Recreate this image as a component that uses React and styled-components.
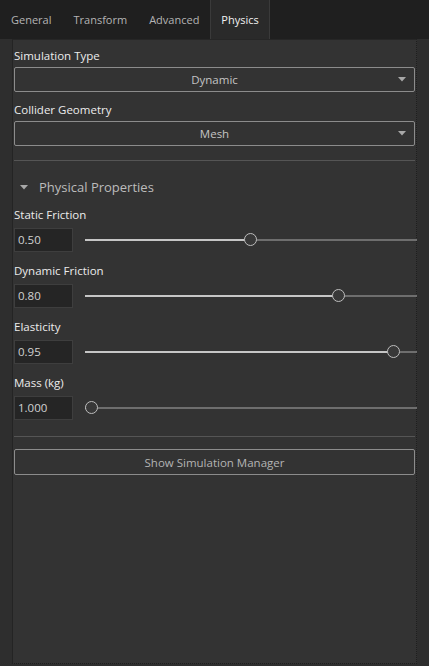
import React from 'react'
import styled, { createGlobalStyle } from 'styled-components'

const Global = createGlobalStyle`
html, body {
    margin:0;
    padding:0;
    background:#2e2e2e;
}
body {
    font-family:"Open Sans", "Noto Sans", sans-serif;
    -webkit-font-smoothing:antialiased;
}
`

const tabs = ['General', 'Transform', 'Advanced', 'Physics']

const sliders = [
    { label: 'Static Friction', value: '0.50', pos: 0.5 },
    { label: 'Dynamic Friction', value: '0.80', pos: 0.776 },
    { label: 'Elasticity', value: '0.95', pos: 0.95 },
    { label: 'Mass (kg)', value: '1.000', pos: 0 },
]

function Caret() {
    return (
        <svg width="8" height="5" viewBox="0 0 8 5">
            <path d="M0 0 L8 0 L4 4.5 Z" fill="#a8a8a8" />
        </svg>
    )
}

function App() {
    return (
        <Page>
            <Global />
            <TabBar>
                {tabs.map(t => (
                    <Tab key={t} active={t === 'Physics'}>{t}</Tab>
                ))}
            </TabBar>
            <Panel>
                <Label>Simulation Type</Label>
                <Select>
                    <span>Dynamic</span>
                    <Arrow><Caret /></Arrow>
                </Select>
                <Label gap>Collider Geometry</Label>
                <Select>
                    <span>Mesh</span>
                    <Arrow><Caret /></Arrow>
                </Select>
                <Divider top={14} />
                <SectionHeader>
                    <Caret />
                    <span>Physical Properties</span>
                </SectionHeader>
                {sliders.map(s => (
                    <Field key={s.label}>
                        <Label>{s.label}</Label>
                        <SliderRow>
                            <NumberBox>{s.value}</NumberBox>
                            <Track>
                                <Filled style={{ width: `calc(7px + (100% - 14px) * ${s.pos})` }} />
                                <Thumb style={{ left: `calc((100% - 14px) * ${s.pos})` }} />
                            </Track>
                        </SliderRow>
                    </Field>
                ))}
                <Divider top={16} />
                <Button>Show Simulation Manager</Button>
            </Panel>
        </Page>
    )
}

export default App

const Page = styled.div`
height:666px;
display:flex;
flex-direction:column;
`
const TabBar = styled.div`
height:39px;
background:#1f1f1f;
display:flex;
flex-shrink:0;
`
const Tab = styled.div`
padding:0 10px;
display:flex;
align-items:center;
font-size:11px;
color:${p => p.active ? '#f2f2f2' : '#b4b4b4'};
background:${p => p.active ? '#2a2a2a' : 'transparent'};
border-left:1px solid ${p => p.active ? '#3a3a3a' : 'transparent'};
border-right:1px solid ${p => p.active ? '#3a3a3a' : 'transparent'};
`
const Panel = styled.div`
flex:1;
margin:0 12px 2px 12px;
padding:7px 1px 0 1px;
background:#333333;
border-top:1px solid #262626;
border-left:1px solid #242424;
border-right:1px dotted #1e1e1e;
border-bottom:1px dotted #1e1e1e;
display:flex;
flex-direction:column;
`
const Label = styled.div`
height:18px;
line-height:18px;
font-size:11.5px;
color:#ececec;
margin-top:${p => p.gap ? '9px' : '0'};
margin-bottom:2px;
`
const Select = styled.div`
position:relative;
height:23px;
border:1px solid #8c8c8c;
border-radius:2px;
display:flex;
align-items:center;
justify-content:center;
font-size:11.5px;
color:#c4c4c4;
`
const Arrow = styled.div`
position:absolute;
right:8px;
top:9px;
display:flex;
`
const Divider = styled.div`
height:1px;
background:#555555;
margin-top:${p => p.top}px;
`
const SectionHeader = styled.div`
height:18px;
margin-top:17px;
display:flex;
align-items:center;
gap:11px;
padding-left:6px;
font-size:13px;
color:#bcbcbc;
`
const Field = styled.div`
margin-top:9px;
&:not(:first-of-type) {
    margin-top:10px;
}
`
const SliderRow = styled.div`
display:flex;
align-items:center;
gap:12px;
margin-top:4px;
`
const NumberBox = styled.div`
width:54px;
height:22px;
padding-left:3px;
background:#252525;
border:1px solid #3e3e3e;
font-size:11.5px;
line-height:22px;
color:#d2d2d2;
`
const Track = styled.div`
position:relative;
flex:1;
height:2px;
margin-right:-2px;
background:#6e6e6e;
`
const Filled = styled.div`
position:absolute;
left:0;
top:0;
height:2px;
background:#c6c6c6;
`
const Thumb = styled.div`
position:absolute;
top:-6px;
width:11px;
height:11px;
border-radius:50%;
border:1.5px solid #bdbdbd;
background:#383838;
`
const Button = styled.div`
margin-top:12px;
height:24px;
border:1px solid #8c8c8c;
border-radius:2px;
display:flex;
align-items:center;
justify-content:center;
font-size:11.5px;
color:#b4b4b4;
`
